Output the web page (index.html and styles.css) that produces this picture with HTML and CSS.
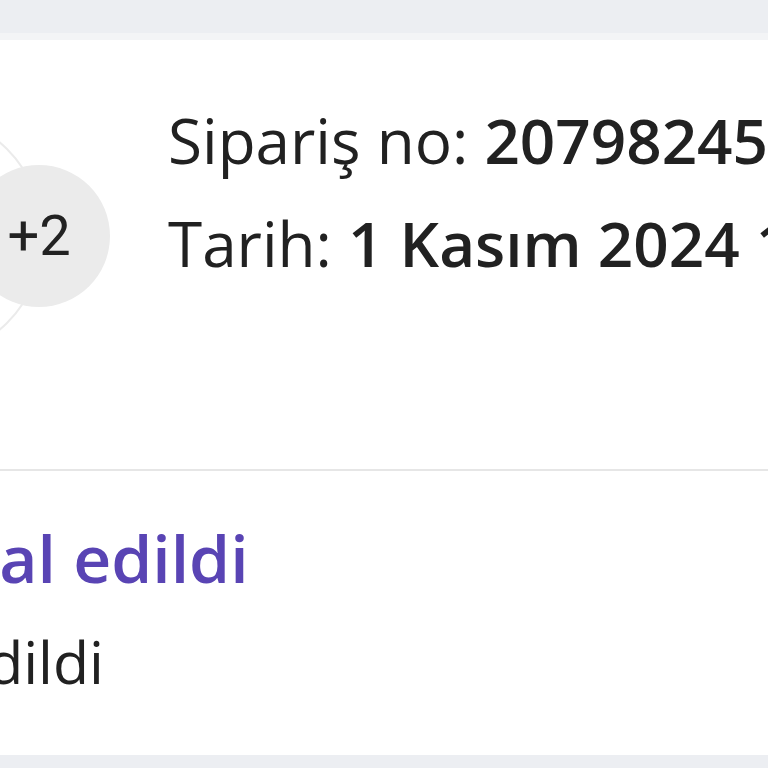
FILE: index.html
```html
<!DOCTYPE html>
<html lang="tr">
<head>
  <meta charset="UTF-8" />
  <title>Sipariş detayı</title>
  <link rel="stylesheet" href="styles.css">
</head>
<body>
  <div class="top-band"></div>

  <div class="order-card">
    <div class="order-row">
      <div class="thumbs">
        <div class="thumb-ring"></div>
        <div class="more-count">+2</div>
      </div>
      <div class="order-info">
        <div class="info-line">Sipariş no: <strong>2079824513</strong></div>
        <div class="info-line">Tarih: <strong>1 Kasım 2024 14:32</strong></div>
      </div>
    </div>

    <div class="order-status">
      <div class="status-title">İptal edildi</div>
      <div class="status-text">edildi</div>
    </div>
  </div>

  <div class="bottom-band"></div>
</body>
</html>
```

FILE: styles.css
```css
* {
  box-sizing: border-box;
}

body {
  margin: 0;
  padding: 0;
  font-family: 'Open Sans', 'Noto Sans', sans-serif;
  color: #212121;
  background: #ffffff;
  height: 768px;
  overflow: hidden;
}

.top-band {
  height: 40px;
  background: #eceef2;
  border-bottom: 7px solid #f3f4f6;
}

.order-card {
  background: #ffffff;
  overflow: hidden;
}

.order-row {
  display: flex;
  align-items: flex-start;
  height: 431px;
  padding-top: 49px;
  border-bottom: 2px solid #e6e6e6;
}

.thumbs {
  position: relative;
  margin-left: -32px;
  margin-top: 76px;
  flex-shrink: 0;
}

.thumb-ring {
  position: absolute;
  left: -172px;
  top: -53px;
  width: 248px;
  height: 248px;
  border-radius: 50%;
  border: 2px solid #ebebeb;
  background: #ffffff;
}

.more-count {
  position: relative;
  width: 142px;
  height: 142px;
  border-radius: 50%;
  background: #ebebeb;
  display: flex;
  align-items: center;
  justify-content: center;
  font-family: Roboto, 'Liberation Sans', sans-serif;
  font-size: 56px;
  color: #222222;
}

.order-info {
  margin-left: 58px;
  white-space: nowrap;
}

.info-line {
  font-size: 62px;
  line-height: 103px;
}

.info-line strong {
  font-weight: 600;
}

.order-status {
  padding-top: 46px;
  height: 284px;
  white-space: nowrap;
}

.status-title {
  font-size: 66px;
  line-height: 80px;
  font-weight: 600;
  color: #5944b4;
  text-indent: -88px;
}

.status-text {
  margin-top: 24px;
  font-size: 59px;
  line-height: 80px;
  text-indent: -46px;
}

.bottom-band {
  height: 20px;
  background: #eceef2;
}
```
